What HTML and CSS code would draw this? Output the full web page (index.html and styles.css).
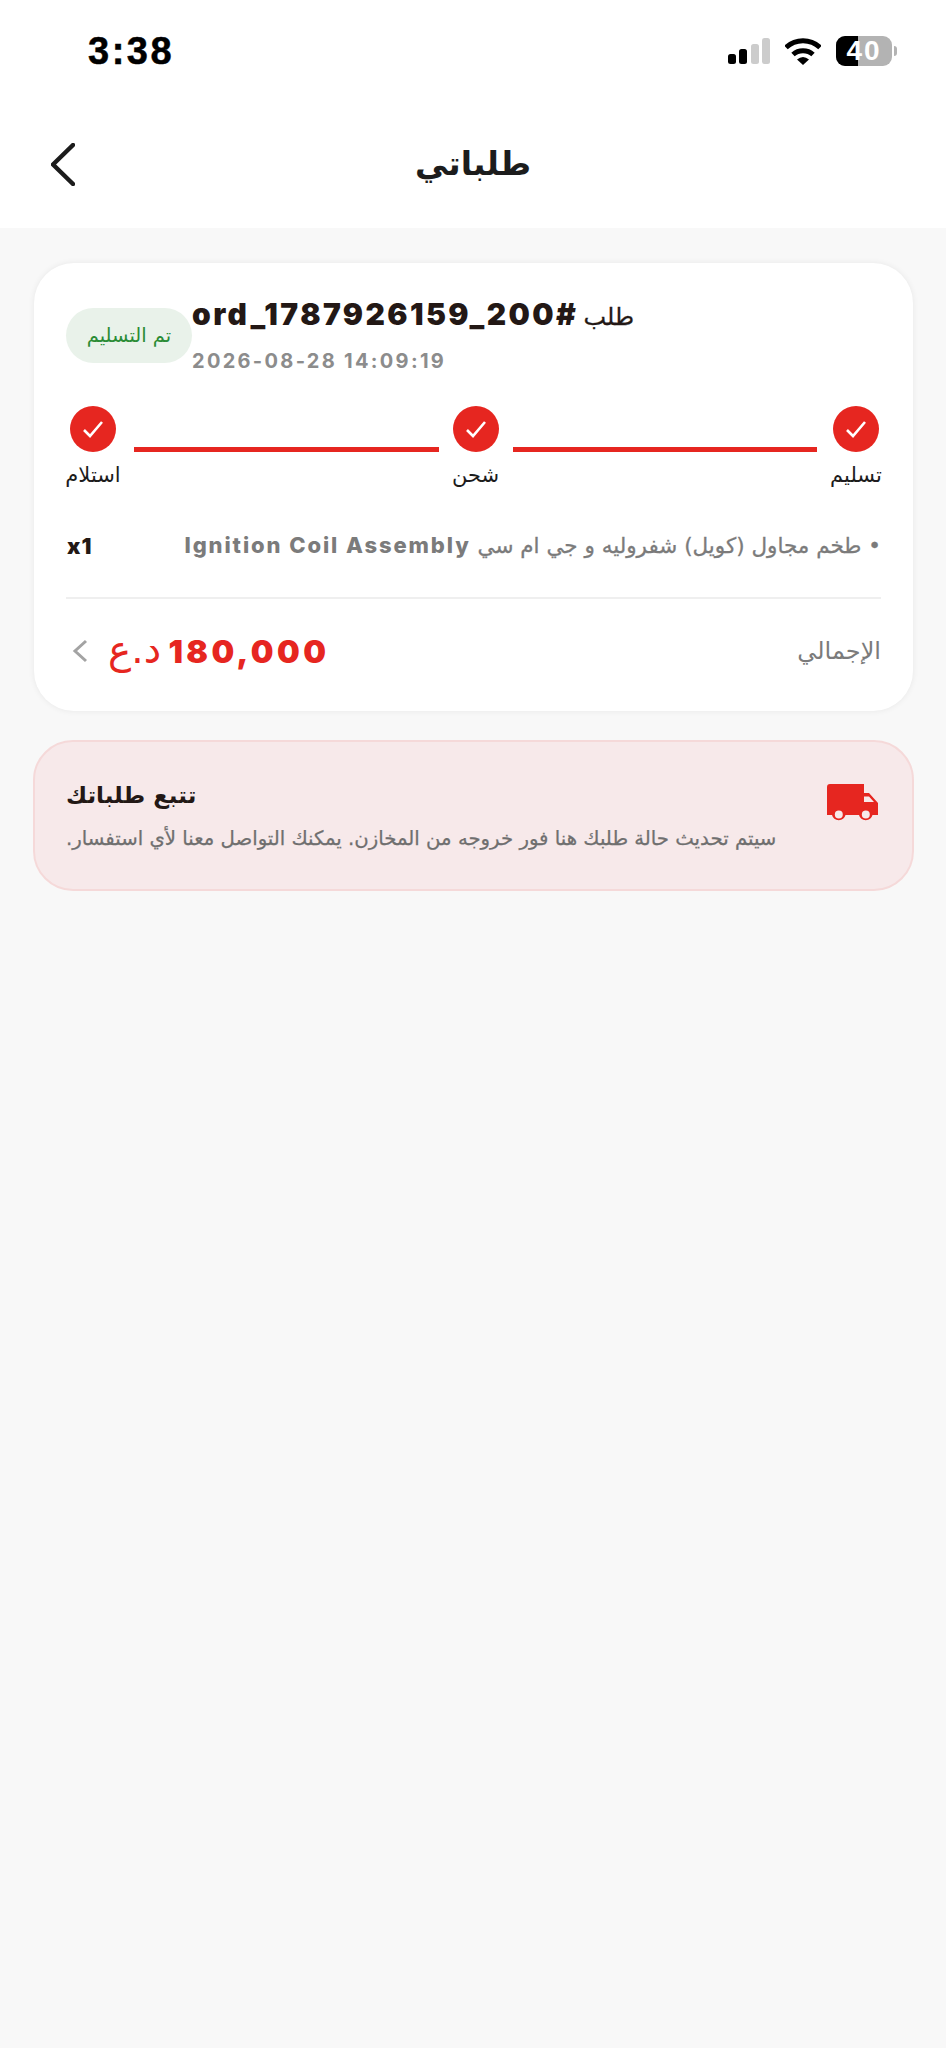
FILE: index.html
```html
<!DOCTYPE html>
<html lang="ar">
<head>
<meta charset="utf-8">
<title>طلباتي</title>
<link rel="stylesheet" href="styles.css">
</head>
<body>
<header class="top">
  <div class="status">
    <span class="clock">3:38</span>
    <div class="status-icons">
      <svg class="signal" width="42" height="26" viewBox="0 0 42 26"><rect x="0" y="16" width="8" height="10" rx="2.5" fill="#000"/><rect x="11" y="11" width="8" height="15" rx="2.5" fill="#000"/><rect x="23" y="6" width="8" height="20" rx="2.5" fill="#ccc"/><rect x="34" y="0" width="8" height="26" rx="2.5" fill="#ccc"/></svg>
      <svg class="wifi" width="36" height="27" viewBox="0 0 36 27"><path d="M1 9.5C10.500.5 25.500.5 35 9.500" fill="none" stroke="#000" stroke-width="5"/><path d="M8 16.500C13.500 11.500 22.500 11.500 28 16.500" fill="none" stroke="#000" stroke-width="5"/><path d="M12 21.500Q18 16.500 24 21.500L18 27Z" fill="#000"/></svg>
      <div class="battery"><div class="battery-body"><span class="battery-fill"></span><span class="battery-num">40</span></div><span class="battery-nub"></span></div>
    </div>
  </div>
  <div class="navbar">
    <svg class="back" width="24" height="43" viewBox="0 0 24 43"><path d="M22 2 2 21.500 22 41" fill="none" stroke="#1c1c1c" stroke-width="4.500" stroke-linecap="round" stroke-linejoin="round"/></svg>
    <h1 class="page-title" dir="rtl">طلباتي</h1>
  </div>
</header>

<main class="content">
  <section class="card">
    <div class="order-head">
      <span class="badge" dir="rtl">تم التسليم</span>
      <div class="order-info">
        <div class="order-id" dir="rtl">طلب <span class="order-code">#ord_1787926159_200</span></div>
        <div class="order-date">2026-08-28 14:09:19</div>
      </div>
    </div>

    <div class="steps">
      <div class="step step-a"><span class="dot"><svg width="22" height="18" viewBox="0 0 22 18"><path d="M2 10l6 6L20 2" fill="none" stroke="#fff" stroke-width="2.600"/></svg></span><span class="step-label" dir="rtl">استلام</span></div>
      <span class="line"></span>
      <div class="step step-b"><span class="dot"><svg width="22" height="18" viewBox="0 0 22 18"><path d="M2 10l6 6L20 2" fill="none" stroke="#fff" stroke-width="2.600"/></svg></span><span class="step-label" dir="rtl">شحن</span></div>
      <span class="line"></span>
      <div class="step step-c"><span class="dot"><svg width="22" height="18" viewBox="0 0 22 18"><path d="M2 10l6 6L20 2" fill="none" stroke="#fff" stroke-width="2.600"/></svg></span><span class="step-label" dir="rtl">تسليم</span></div>
    </div>

    <div class="item">
      <span class="qty">x1</span>
      <span class="item-name" dir="rtl">• طخم مجاول (كويل) شفروليه و جي ام سي <span class="item-latin">Ignition Coil Assembly</span></span>
    </div>

    <div class="total">
      <svg class="chev" width="16" height="24" viewBox="0 0 16 24"><path d="M14 2 3 12l11 10" fill="none" stroke="#a3a3a3" stroke-width="3"/></svg>
      <span class="price" dir="rtl"><span class="amount">180,000</span> <span class="cur">د.ع</span></span>
      <span class="total-label" dir="rtl">الإجمالي</span>
    </div>
  </section>

  <section class="notice">
    <div class="notice-text">
      <h2 class="notice-title" dir="rtl">تتبع طلباتك</h2>
      <p class="notice-body" dir="rtl">سيتم تحديث حالة طلبك هنا فور خروجه من المخازن. يمكنك التواصل معنا لأي استفسار.</p>
    </div>
    <svg class="truck" width="51" height="37" viewBox="0 0 51 37"><path fill="#e62620" fill-rule="evenodd" d="M3 0H37V9H42L51 19V31H45.500A7 7 0 0 1 32 31H18.500A7 7 0 0 1 5 31H0V3A3 3 0 0 1 3 0ZM37 12.500V18H47L42 12.500ZM11.800 26.500A4 4 0 1 0 11.801 34.500A4 4 0 1 0 11.800 26.500ZM38.800 26.500A4 4 0 1 0 38.801 34.500A4 4 0 1 0 38.800 26.500Z"/></svg>
  </section>
</main>
</body>
</html>
```

FILE: styles.css
```css
* { box-sizing: border-box; margin: 0; padding: 0; }
html, body { height: 100%; }
body {
  background: #f8f8f8;
  font-family: Inter, "DejaVu Sans", sans-serif;
  color: #231815;
}
.top { background: #fff; height: 228px; }
.status {
  height: 128px;
  padding: 36px 49px 0 88px;
  display: flex;
  justify-content: space-between;
  align-items: flex-start;
}
.clock {
  font: 700 38px/30px "Liberation Sans", sans-serif;
  color: #000;
  letter-spacing: 2.500px;
  -webkit-text-stroke: .5px #000;
}
.status-icons { display: flex; align-items: flex-start; gap: 15px; padding-top: 2px; }
.battery { display: flex; align-items: center; gap: 2px; margin-top: -2px; }
.battery-body {
  position: relative;
  width: 56px;
  height: 30px;
  border-radius: 9px;
  background: #b3b3b3;
  display: flex;
  align-items: center;
  justify-content: center;
}
.battery-fill { position: absolute; left: 0; top: 0; bottom: 0; width: 22px; background: #000; border-radius: 9px 0 0 9px; }
.battery-num { position: relative; color: #fff; font: 700 28px/30px "Liberation Sans", sans-serif; letter-spacing: 2px; }
.battery-nub { width: 3px; height: 10px; background: #b3b3b3; border-radius: 0 3px 3px 0; }
.navbar {
  height: 100px;
  position: relative;
  display: flex;
  align-items: center;
  justify-content: center;
}
.back { position: absolute; left: 51px; top: 15px; }
.page-title { font: 700 33px/40px "DejaVu Sans", sans-serif; color: #1c1c1c; margin-top: -28px; }
.content { padding: 35px 33px 0 34px; display: flex; flex-direction: column; gap: 29px; }
.card {
  background: #fff;
  border-radius: 40px;
  height: 448px;
  padding: 33px 32px 0;
  box-shadow: 0 0 6px rgba(0, 0, 0, .07);
}
.order-head { display: flex; align-items: center; }
.badge {
  width: 126px;
  height: 55px;
  border-radius: 28px;
  background: #e9f2ea;
  color: #2a8c35;
  font: 400 19.500px/55px "DejaVu Sans", sans-serif;
  text-align: center;
  flex: none;
}
.order-info { display: flex; flex-direction: column; gap: 13px; }
.order-id { font: 400 24px/36px "DejaVu Sans", sans-serif; -webkit-text-stroke: .3px #231815; }
.order-code { font: 900 30px/36px Inter, sans-serif; letter-spacing: 2.400px; -webkit-text-stroke: 0; }
.order-date { font: 700 20px/26px Inter, sans-serif; color: #8c8c8c; letter-spacing: 2.300px; text-align: left; }
.steps { display: flex; gap: 14px; margin-top: 32px; }
.step { display: flex; flex-direction: column; align-items: center; gap: 9px; flex: none; }
.step-a { width: 54px; }
.step-b { width: 46px; }
.step-c { width: 50px; }
.dot {
  width: 46px;
  height: 46px;
  border-radius: 50%;
  background: #e62620;
  display: flex;
  align-items: center;
  justify-content: center;
}
.step-label { font: 400 21px/28px "DejaVu Sans", sans-serif; white-space: nowrap; color: #1c1c1c; }
.line { flex: 1; height: 5px; background: #e62620; margin-top: 41px; }
.item {
  display: flex;
  justify-content: space-between;
  align-items: center;
  margin-top: 42px;
  padding-bottom: 37px;
  border-bottom: 2px solid #efefef;
}
.qty { font: 900 22px/28px Inter, sans-serif; letter-spacing: 1px; margin-left: 1px; }
.item-name { font: 400 21.500px/28px "DejaVu Sans", sans-serif; color: #7b7b7b; white-space: nowrap; -webkit-text-stroke: .3px #7b7b7b; }
.item-latin { font: 800 22px/28px Inter, sans-serif; letter-spacing: 1.900px; -webkit-text-stroke: 0; }
.total { display: flex; align-items: center; padding: 31px 0 0 6px; }
.chev { flex: none; }
.price { font: 400 39px/40px "DejaVu Sans", sans-serif; color: #e62620; margin-left: 20px; word-spacing: -5px; }
.amount { display: inline-block; font: 900 32px/40px Inter, sans-serif; letter-spacing: 3.400px; }
.total-label { margin-left: auto; font: 400 24px/30px "DejaVu Sans", sans-serif; color: #7b7b7b; }
.notice {
  background: #f7e9ea;
  border: 2px solid #f5d9d9;
  border-radius: 40px;
  height: 151px;
  margin: 0 -1px;
  padding: 0 34px 0 31px;
  display: flex;
  justify-content: space-between;
  align-items: flex-start;
}
.notice-text { padding-top: 37px; display: flex; flex-direction: column; gap: 13px; }
.notice-title { font: 700 23px/32px "DejaVu Sans", sans-serif; text-align: right; align-self: flex-start; }
.notice-body { font: 400 19.700px/30px "DejaVu Sans", sans-serif; color: #6f6f6f; white-space: nowrap; -webkit-text-stroke: .25px #6f6f6f; }
.truck { margin-top: 42px; }
```
